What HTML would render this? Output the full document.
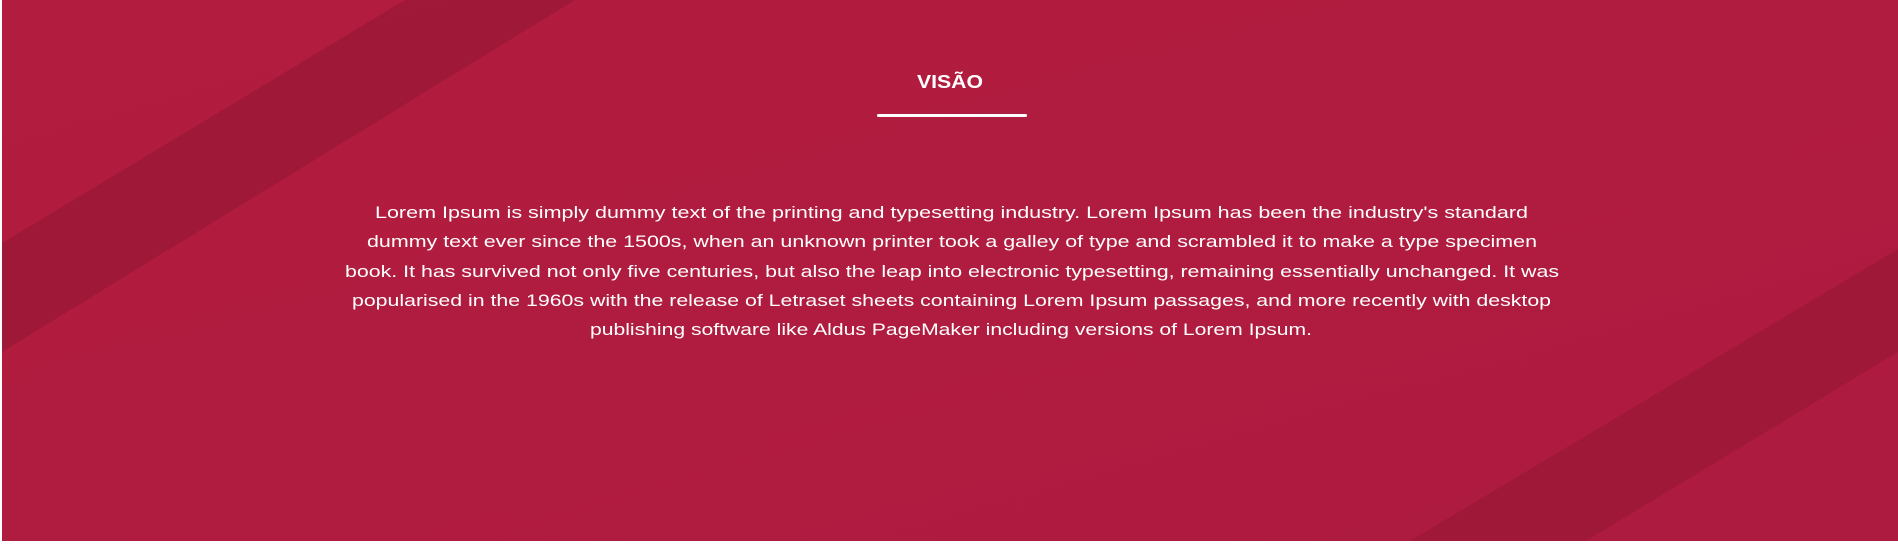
<!DOCTYPE html>
<html><head><meta charset="utf-8"><style>
html,body{margin:0;padding:0;background:#fff;}
body{width:1898px;height:546px;overflow:hidden;position:relative;}
svg{position:absolute;left:0;top:0;}
</style></head><body>
<svg width="1898" height="546" viewBox="0 0 1898 546" xmlns="http://www.w3.org/2000/svg">
<defs>
<linearGradient id="g" x1="0" y1="0" x2="1" y2="1">
<stop offset="0" stop-color="#b21c3e"/>
<stop offset="1" stop-color="#ae1b40"/>
</linearGradient>
</defs>
<rect x="2" y="0" width="1896" height="541" fill="url(#g)"/>
<polygon points="405,0 575,0 2,352 2,243" fill="#9f1837" opacity="0.9"/>
<polygon points="1898,249 1898,352 1586,541 1410,541" fill="#9f1837" opacity="0.9"/>
<text x="950" y="88" text-anchor="middle" font-family="Liberation Sans, sans-serif" font-weight="bold" font-size="18" fill="#fff" textLength="66" lengthAdjust="spacingAndGlyphs">VISÃO</text>
<rect x="877" y="114" width="150" height="3" rx="1.5" fill="#fff"/>
<g font-family="Liberation Sans, sans-serif" font-size="17" fill="#fff" lengthAdjust="spacingAndGlyphs">
<text x="375" y="218" textLength="1153" lengthAdjust="spacingAndGlyphs">Lorem Ipsum is simply dummy text of the printing and typesetting industry. Lorem Ipsum has been the industry's standard</text>
<text x="367" y="247" textLength="1170" lengthAdjust="spacingAndGlyphs">dummy text ever since the 1500s, when an unknown printer took a galley of type and scrambled it to make a type specimen</text>
<text x="345" y="277" textLength="1214" lengthAdjust="spacingAndGlyphs">book. It has survived not only five centuries, but also the leap into electronic typesetting, remaining essentially unchanged. It was</text>
<text x="352" y="306" textLength="1199" lengthAdjust="spacingAndGlyphs">popularised in the 1960s with the release of Letraset sheets containing Lorem Ipsum passages, and more recently with desktop</text>
<text x="590" y="335" textLength="722" lengthAdjust="spacingAndGlyphs">publishing software like Aldus PageMaker including versions of Lorem Ipsum.</text>
</g>
</svg>
</body></html>
